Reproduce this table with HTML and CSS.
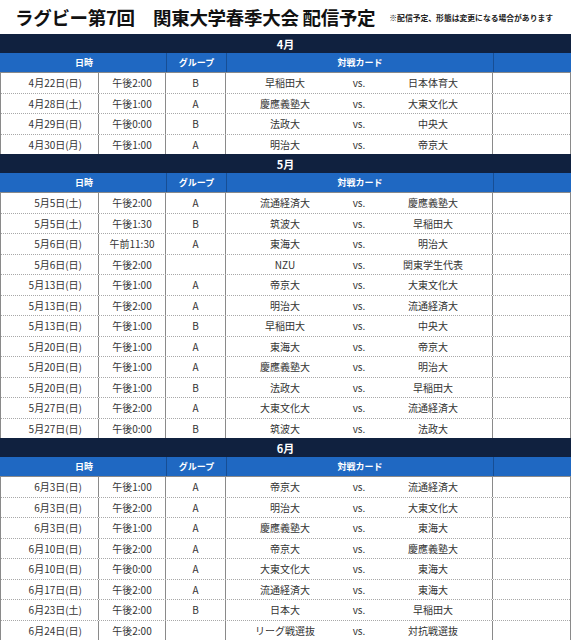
FILE: index.html
```html
<!DOCTYPE html>
<html lang="ja">
<head>
<meta charset="utf-8">
<link rel="stylesheet" href="styles.css">
</head>
<body>
<div class="title">
  <h1 class="title-main">ラグビー第7回　関東大学春季大会 配信予定</h1>
  <span class="title-note">※配信予定、形態は変更になる場合があります</span>
</div>
<div class="tbl">
  <div class="band">4月</div>
  <div class="hrow"><div class="h h-dt">日時</div><div class="h h-gr">グループ</div><div class="h h-mt">対戦カード</div><div class="h h-ex"></div></div>
  <div class="row"><div class="c c-d">4月22日(日)</div><div class="c c-t">午後2:00</div><div class="c c-g">B</div><div class="c c-a">早稲田大</div><div class="c c-v">vs.</div><div class="c c-b">日本体育大</div><div class="c c-x"></div></div>
  <div class="row"><div class="c c-d">4月28日(土)</div><div class="c c-t">午後1:00</div><div class="c c-g">A</div><div class="c c-a">慶應義塾大</div><div class="c c-v">vs.</div><div class="c c-b">大東文化大</div><div class="c c-x"></div></div>
  <div class="row"><div class="c c-d">4月29日(日)</div><div class="c c-t">午後0:00</div><div class="c c-g">B</div><div class="c c-a">法政大</div><div class="c c-v">vs.</div><div class="c c-b">中央大</div><div class="c c-x"></div></div>
  <div class="row"><div class="c c-d">4月30日(月)</div><div class="c c-t">午後1:00</div><div class="c c-g">A</div><div class="c c-a">明治大</div><div class="c c-v">vs.</div><div class="c c-b">帝京大</div><div class="c c-x"></div></div>

  <div class="band">5月</div>
  <div class="hrow"><div class="h h-dt">日時</div><div class="h h-gr">グループ</div><div class="h h-mt">対戦カード</div><div class="h h-ex"></div></div>
  <div class="row"><div class="c c-d">5月5日(土)</div><div class="c c-t">午後2:00</div><div class="c c-g">A</div><div class="c c-a">流通経済大</div><div class="c c-v">vs.</div><div class="c c-b">慶應義塾大</div><div class="c c-x"></div></div>
  <div class="row"><div class="c c-d">5月5日(土)</div><div class="c c-t">午後1:30</div><div class="c c-g">B</div><div class="c c-a">筑波大</div><div class="c c-v">vs.</div><div class="c c-b">早稲田大</div><div class="c c-x"></div></div>
  <div class="row"><div class="c c-d">5月6日(日)</div><div class="c c-t">午前11:30</div><div class="c c-g">A</div><div class="c c-a">東海大</div><div class="c c-v">vs.</div><div class="c c-b">明治大</div><div class="c c-x"></div></div>
  <div class="row"><div class="c c-d">5月6日(日)</div><div class="c c-t">午後2:00</div><div class="c c-g"></div><div class="c c-a">NZU</div><div class="c c-v">vs.</div><div class="c c-b">関東学生代表</div><div class="c c-x"></div></div>
  <div class="row"><div class="c c-d">5月13日(日)</div><div class="c c-t">午後1:00</div><div class="c c-g">A</div><div class="c c-a">帝京大</div><div class="c c-v">vs.</div><div class="c c-b">大東文化大</div><div class="c c-x"></div></div>
  <div class="row"><div class="c c-d">5月13日(日)</div><div class="c c-t">午後2:00</div><div class="c c-g">A</div><div class="c c-a">明治大</div><div class="c c-v">vs.</div><div class="c c-b">流通経済大</div><div class="c c-x"></div></div>
  <div class="row"><div class="c c-d">5月13日(日)</div><div class="c c-t">午後1:00</div><div class="c c-g">B</div><div class="c c-a">早稲田大</div><div class="c c-v">vs.</div><div class="c c-b">中央大</div><div class="c c-x"></div></div>
  <div class="row"><div class="c c-d">5月20日(日)</div><div class="c c-t">午後1:00</div><div class="c c-g">A</div><div class="c c-a">東海大</div><div class="c c-v">vs.</div><div class="c c-b">帝京大</div><div class="c c-x"></div></div>
  <div class="row"><div class="c c-d">5月20日(日)</div><div class="c c-t">午後1:00</div><div class="c c-g">A</div><div class="c c-a">慶應義塾大</div><div class="c c-v">vs.</div><div class="c c-b">明治大</div><div class="c c-x"></div></div>
  <div class="row"><div class="c c-d">5月20日(日)</div><div class="c c-t">午後1:00</div><div class="c c-g">B</div><div class="c c-a">法政大</div><div class="c c-v">vs.</div><div class="c c-b">早稲田大</div><div class="c c-x"></div></div>
  <div class="row"><div class="c c-d">5月27日(日)</div><div class="c c-t">午後2:00</div><div class="c c-g">A</div><div class="c c-a">大東文化大</div><div class="c c-v">vs.</div><div class="c c-b">流通経済大</div><div class="c c-x"></div></div>
  <div class="row"><div class="c c-d">5月27日(日)</div><div class="c c-t">午後0:00</div><div class="c c-g">B</div><div class="c c-a">筑波大</div><div class="c c-v">vs.</div><div class="c c-b">法政大</div><div class="c c-x"></div></div>

  <div class="band">6月</div>
  <div class="hrow"><div class="h h-dt">日時</div><div class="h h-gr">グループ</div><div class="h h-mt">対戦カード</div><div class="h h-ex"></div></div>
  <div class="row"><div class="c c-d">6月3日(日)</div><div class="c c-t">午後1:00</div><div class="c c-g">A</div><div class="c c-a">帝京大</div><div class="c c-v">vs.</div><div class="c c-b">流通経済大</div><div class="c c-x"></div></div>
  <div class="row"><div class="c c-d">6月3日(日)</div><div class="c c-t">午後2:00</div><div class="c c-g">A</div><div class="c c-a">明治大</div><div class="c c-v">vs.</div><div class="c c-b">大東文化大</div><div class="c c-x"></div></div>
  <div class="row"><div class="c c-d">6月3日(日)</div><div class="c c-t">午後1:00</div><div class="c c-g">A</div><div class="c c-a">慶應義塾大</div><div class="c c-v">vs.</div><div class="c c-b">東海大</div><div class="c c-x"></div></div>
  <div class="row"><div class="c c-d">6月10日(日)</div><div class="c c-t">午後2:00</div><div class="c c-g">A</div><div class="c c-a">帝京大</div><div class="c c-v">vs.</div><div class="c c-b">慶應義塾大</div><div class="c c-x"></div></div>
  <div class="row"><div class="c c-d">6月10日(日)</div><div class="c c-t">午後0:00</div><div class="c c-g">A</div><div class="c c-a">大東文化大</div><div class="c c-v">vs.</div><div class="c c-b">東海大</div><div class="c c-x"></div></div>
  <div class="row"><div class="c c-d">6月17日(日)</div><div class="c c-t">午後2:00</div><div class="c c-g">A</div><div class="c c-a">流通経済大</div><div class="c c-v">vs.</div><div class="c c-b">東海大</div><div class="c c-x"></div></div>
  <div class="row"><div class="c c-d">6月23日(土)</div><div class="c c-t">午後2:00</div><div class="c c-g">B</div><div class="c c-a">日本大</div><div class="c c-v">vs.</div><div class="c c-b">早稲田大</div><div class="c c-x"></div></div>
  <div class="row"><div class="c c-d">6月24日(日)</div><div class="c c-t">午後2:00</div><div class="c c-g"></div><div class="c c-a">リーグ戦選抜</div><div class="c c-v">vs.</div><div class="c c-b">対抗戦選抜</div><div class="c c-x"></div></div>
</div>
</body>
</html>
```
FILE: styles.css
```css
html, body {
  margin: 0;
  padding: 0;
  background: #ffffff;
}
body {
  font-family: "Noto Sans CJK JP", "Noto Sans", sans-serif;
  color: #333333;
  width: 571px;
}
.title {
  height: 34px;
  display: flex;
  align-items: center;
  padding-left: 15px;
  box-sizing: border-box;
}
.title-main {
  margin: 0;
  font-size: 18.5px;
  font-weight: 700;
  color: #111111;
  letter-spacing: -0.3px;
  line-height: 1;
}
.title-note {
  margin-left: 14px;
  font-size: 7.8px;
  font-weight: 700;
  color: #222222;
  line-height: 1;
  padding-top: 2px;
}
.tbl {
  width: 571px;
  box-sizing: border-box;
  border-left: 1px solid #8a8a8a;
  border-right: 1px solid #8a8a8a;
}
.band {
  height: 19px;
  margin: 0 -1px;
  background: #10213f;
  color: #ffffff;
  font-size: 11px;
  font-weight: 700;
  display: flex;
  align-items: center;
  justify-content: center;
}
.hrow, .row {
  display: grid;
  grid-template-columns: 98px 67px 60px 118px 30px 119px 1fr;
}
.hrow {
  height: 19px;
  background: #1f68c2;
  margin: 0 -1px;
  padding: 0 1px;
  border-left: 1px solid #1f68c2;
}
.h {
  color: #ffffff;
  font-size: 9px;
  font-weight: 700;
  display: flex;
  align-items: center;
  justify-content: center;
  box-sizing: border-box;
  border-right: 1px solid #174e94;
}
.h-dt { grid-column: 1 / span 2; }
.h-mt { grid-column: 4 / span 3; }
.h-ex { border-right: none; }
.row {
  height: 20.5px;
  box-sizing: border-box;
  border-top: 1px dotted #a8a8a8;
}
.hrow + .row {
  border-top: 1px solid #8a8a8a;
}
.c {
  font-size: 10px;
  display: flex;
  align-items: center;
  justify-content: center;
  box-sizing: border-box;
  white-space: nowrap;
}
.c-d {
  justify-content: flex-end;
  padding-right: 16px;
  border-right: 1px solid #8a8a8a;
}
.c-t, .c-g, .c-b {
  border-right: 1px solid #8a8a8a;
}
```
